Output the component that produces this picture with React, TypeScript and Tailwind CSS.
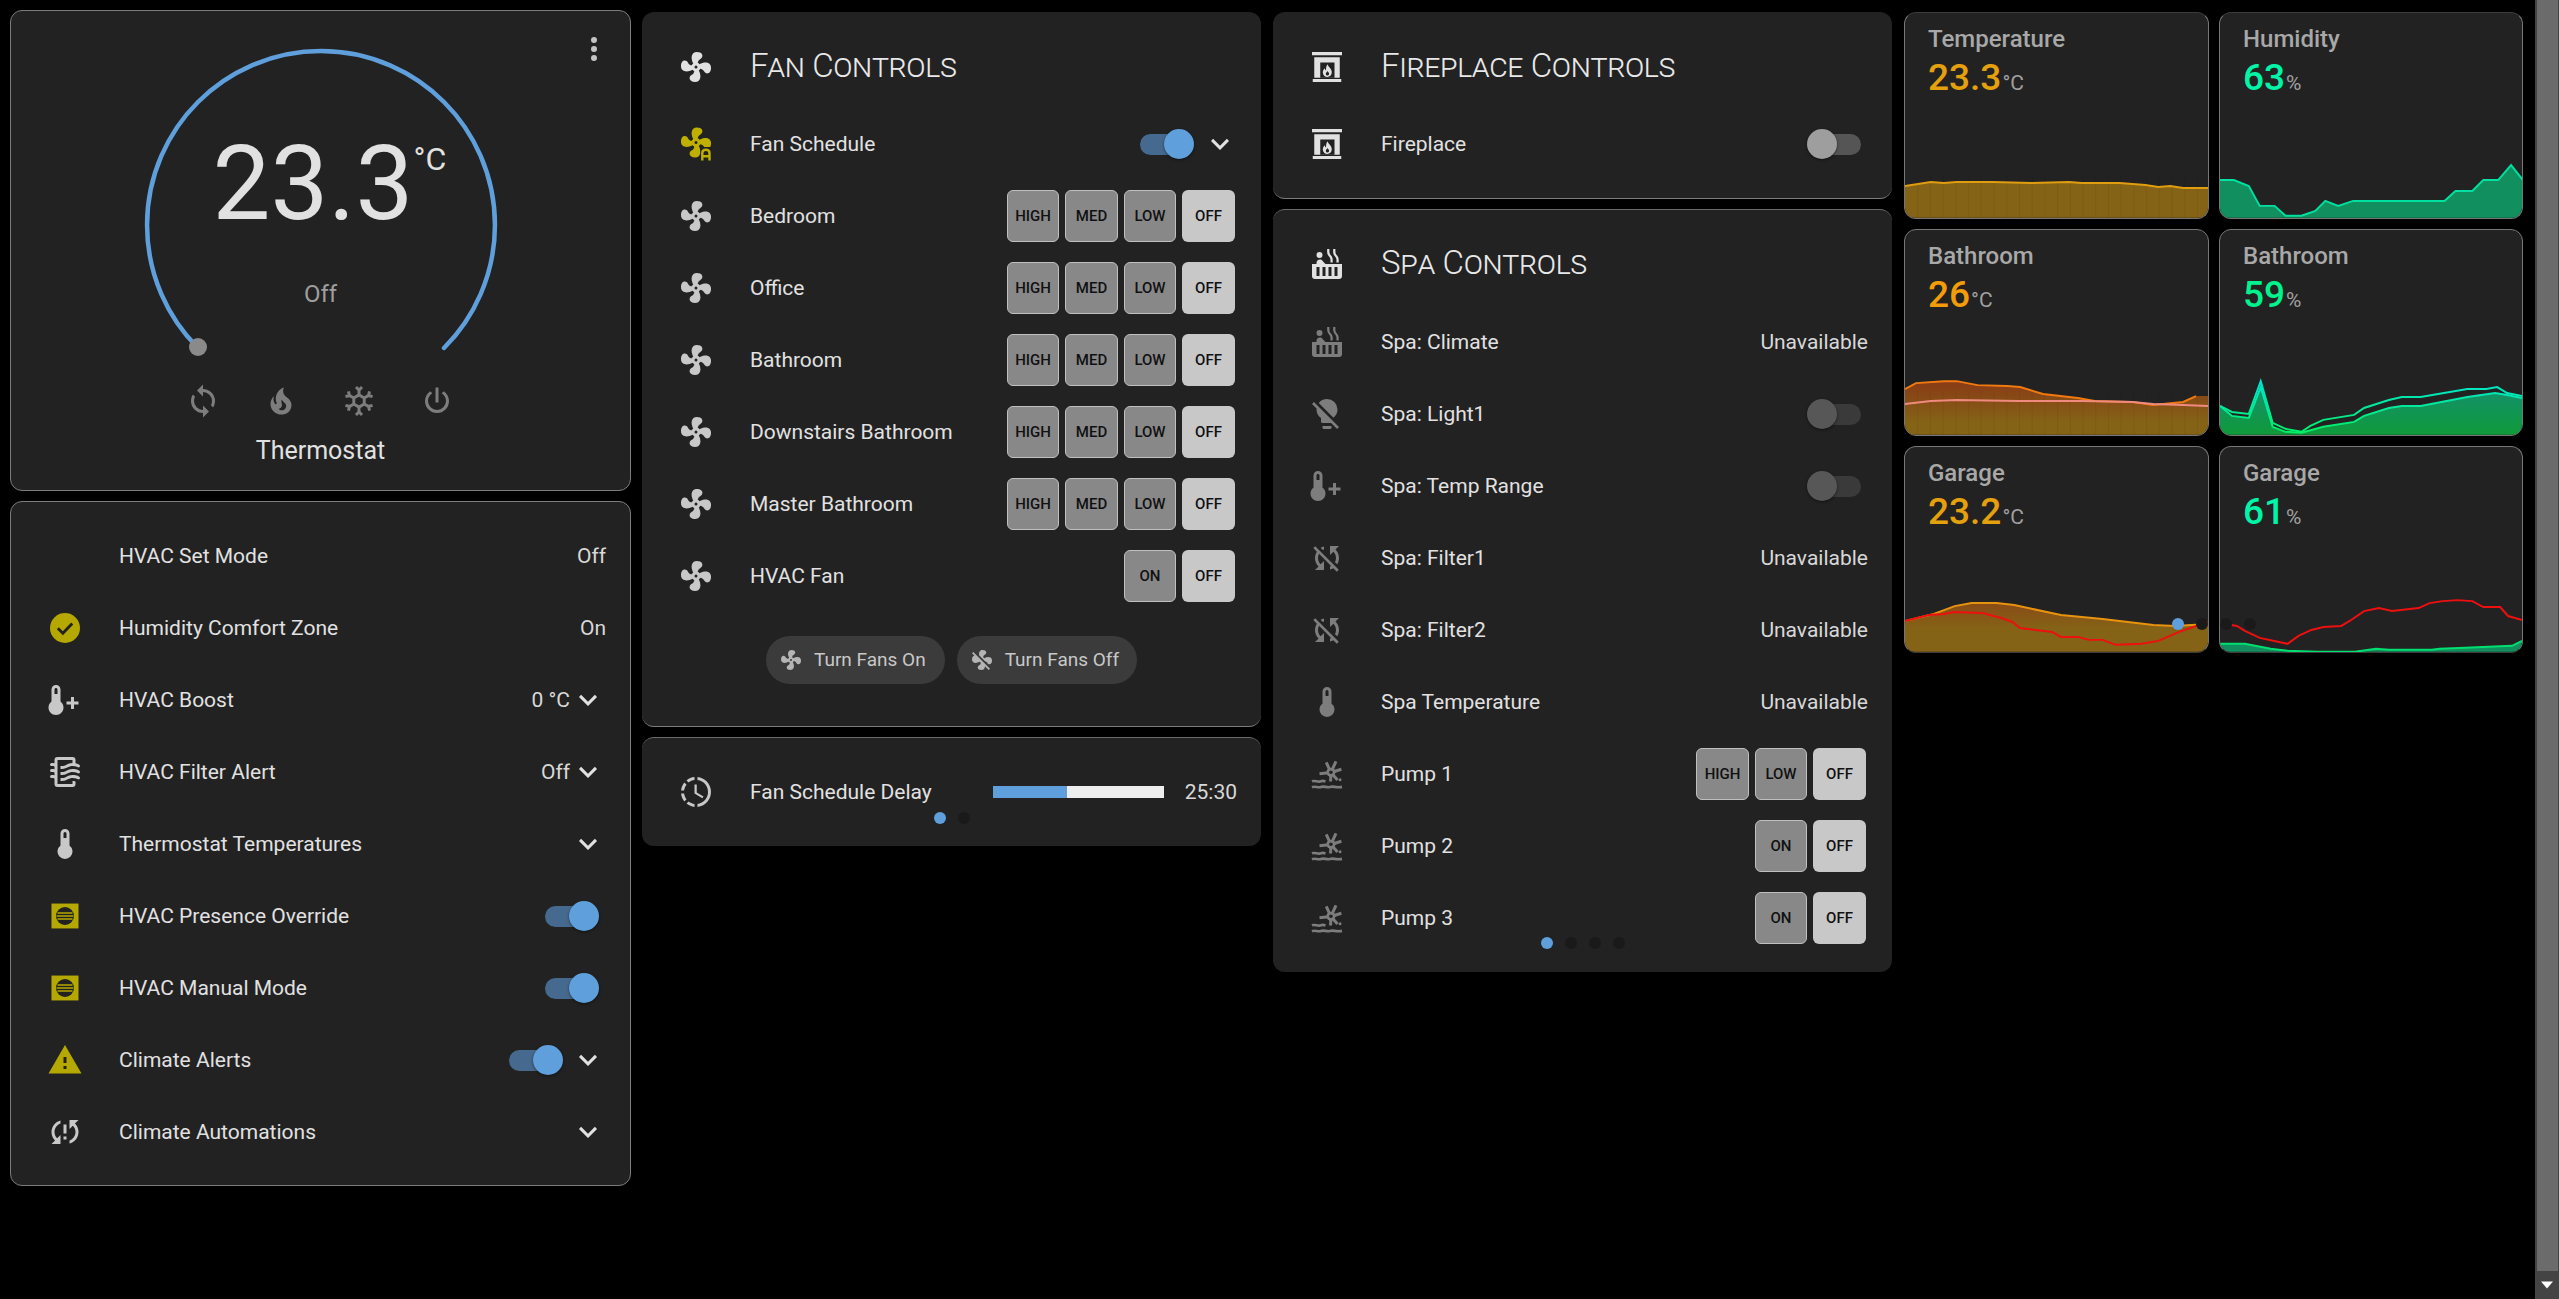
import React from 'react'

const FONT = "font-['Roboto',sans-serif]"

const P = {
  fan: 'M12,11A1,1 0 0,0 11,12A1,1 0 0,0 12,13A1,1 0 0,0 13,12A1,1 0 0,0 12,11M12.5,2C17,2 17.11,5.57 14.75,6.75C13.76,7.24 13.32,8.29 13.13,9.22C13.61,9.42 14.03,9.73 14.35,10.13C18.05,8.13 22.03,8.92 22.03,12.5C22.03,17 18.46,17.1 17.28,14.73C16.78,13.74 15.72,13.3 14.79,13.11C14.59,13.59 14.28,14 13.88,14.34C15.87,18.03 15.08,22 11.5,22C7,22 6.91,18.42 9.27,17.24C10.25,16.75 10.69,15.71 10.89,14.79C10.4,14.59 9.97,14.27 9.65,13.87C5.96,15.85 2,15.07 2,11.5C2,7 5.56,6.89 6.74,9.26C7.24,10.25 8.29,10.68 9.22,10.87C9.41,10.39 9.73,9.97 10.14,9.65C8.15,5.96 8.94,2 12.5,2Z',
  fanOff: 'M12.5,2C9.64,2 8.57,4.55 9.29,7.47L15,13.16C15.87,13.37 16.81,13.81 17.28,14.73C18.46,17.1 22.03,17 22.03,12.5C22.03,8.92 18.05,8.13 14.35,10.13C14.03,9.73 13.61,9.42 13.13,9.22C13.32,8.29 13.76,7.24 14.75,6.75C17.11,5.57 17,2 12.5,2M3.28,4L2,5.27L4.47,7.74C3.22,7.74 2,8.87 2,11.5C2,15.07 5.96,15.85 9.65,13.87C9.97,14.27 10.4,14.59 10.89,14.79C10.69,15.71 10.25,16.75 9.27,17.24C6.91,18.42 7,22 11.5,22C13.8,22 14.94,20.36 14.94,18.21L18.73,22L20,20.72L3.28,4Z',
  thermometer: 'M15 13V5A3 3 0 0 0 9 5V13A5 5 0 1 0 15 13M12 4A1 1 0 0 1 13 5V8H11V5A1 1 0 0 1 12 4Z',
  thermometerPlus: 'M9 13V5C9 3.3 7.7 2 6 2S3 3.3 3 5V13C1.8 13.9 1 15.4 1 17C1 19.8 3.2 22 6 22S11 19.8 11 17C11 15.4 10.2 13.9 9 13M5 5C5 4.4 5.4 4 6 4S7 4.4 7 5V8H5V5M18 10H16V13H13V15H16V18H18V15H21V13H18V10Z',
  airFilter: 'M19,18.31V20A2,2 0 0,1 17,22H7A2,2 0 0,1 5,20V16.3C4.54,16.12 3.95,16 3,16A1,1 0 0,1 2,15A1,1 0 0,1 3,14C3.82,14 4.47,14.08 5,14.21V12.3C4.54,12.12 3.95,12 3,12A1,1 0 0,1 2,11A1,1 0 0,1 3,10C3.82,10 4.47,10.08 5,10.21V8.3C4.54,8.12 3.95,8 3,8A1,1 0 0,1 2,7A1,1 0 0,1 3,6C3.82,6 4.47,6.08 5,6.21V4A2,2 0 0,1 7,2H17A2,2 0 0,1 19,4V6.16C20.78,6.47 21.54,7.13 21.71,7.29C22.1,7.68 22.1,8.32 21.71,8.71C21.32,9.1 20.8,9.09 20.29,8.71V8.71C20.29,8.71 19.25,8 17,8C15.74,8 14.91,8.41 13.95,8.9C12.91,9.41 11.74,10 10,10C9.64,10 9.31,10 9,9.96V7.95C9.3,8 9.63,8 10,8C11.26,8 12.09,7.59 13.05,7.11C14.09,6.59 15.27,6 17,6V4H7V20H17V18C18.5,18 18.97,18.29 19,18.31M17,10C15.27,10 14.09,10.59 13.05,11.11C12.09,11.59 11.26,12 10,12C9.63,12 9.3,12 9,11.95V13.96C9.31,14 9.64,14 10,14C11.74,14 12.91,13.41 13.95,12.89C14.91,12.41 15.74,12 17,12C19.25,12 20.29,12.71 20.29,12.71V12.71C20.8,13.1 21.32,13.1 21.71,12.71C22.1,12.32 22.1,11.69 21.71,11.29C21.5,11.08 20.25,10 17,10M17,14C15.27,14 14.09,14.59 13.05,15.11C12.09,15.59 11.26,16 10,16C9.63,16 9.3,16 9,15.95V17.96C9.31,18 9.64,18 10,18C11.74,18 12.91,17.41 13.95,16.89C14.91,16.41 15.74,16 17,16C19.25,16 20.29,16.71 20.29,16.71V16.71C20.8,17.1 21.32,17.1 21.71,16.71C22.1,16.32 22.1,15.69 21.71,15.29C21.5,15.08 20.25,14 17,14Z',
  alert: 'M13 14H11V10H13M13 18H11V16H13M1 21H23L12 2L1 21Z',
  syncAlert: 'M11,13H13V7H11M21,4H15V10L17.24,7.76C18.32,8.85 19,10.34 19,12C19,14.61 17.33,16.83 15,17.65V19.74C18.45,18.85 21,15.73 21,12C21,9.79 20.09,7.8 18.64,6.36M11,17H13V15H11M3,12C3,14.21 3.91,16.2 5.36,17.64L3,20H9V14L6.76,16.24C5.68,15.15 5,13.66 5,12C5,9.39 6.67,7.17 9,6.35V4.26C5.55,5.15 3,8.27 3,12Z',
  sync: 'M12,18A6,6 0 0,1 6,12C6,11 6.25,10.03 6.7,9.2L5.24,7.74C4.46,8.97 4,10.43 4,12A8,8 0 0,0 12,20V23L16,19L12,15M12,4V1L8,5L12,9V6A6,6 0 0,1 18,12C18,13 17.75,13.97 17.3,14.8L18.76,16.26C19.54,15.03 20,13.57 20,12A8,8 0 0,0 12,4Z',
  fire: 'M17.66 11.2C17.43 10.9 17.15 10.64 16.89 10.38C16.22 9.78 15.46 9.35 14.82 8.72C13.33 7.26 13 4.85 13.95 3C13 3.23 12.17 3.75 11.46 4.32C8.87 6.4 7.85 10.07 9.07 13.22C9.11 13.32 9.15 13.42 9.15 13.55C9.15 13.77 9 13.97 8.8 14.05C8.57 14.15 8.33 14.09 8.14 13.93C8.08 13.88 8.04 13.83 8 13.76C6.87 12.33 6.69 10.28 7.45 8.64C5.78 10 4.87 12.3 5 14.47C5.06 14.97 5.12 15.47 5.29 15.97C5.43 16.57 5.7 17.17 6 17.7C7.08 19.43 8.95 20.67 10.96 20.92C13.1 21.19 15.39 20.8 17.03 19.32C18.86 17.66 19.5 15 18.56 12.72L18.43 12.46C18.22 12 17.66 11.2 17.66 11.2M14.5 17.5C14.22 17.74 13.76 18 13.4 18.1C12.28 18.5 11.16 17.94 10.5 17.28C11.69 17 12.4 16.12 12.61 15.23C12.78 14.43 12.46 13.77 12.33 13C12.21 12.26 12.23 11.63 12.5 10.94C12.69 11.32 12.89 11.7 13.13 12C13.9 13 15.11 13.44 15.37 14.8C15.41 14.94 15.43 15.08 15.43 15.23C15.46 16.05 15.1 16.95 14.5 17.5H14.5Z',
  snowflake: 'M20.79,13.95L18.46,14.57L16.46,13.44V10.56L18.46,9.43L20.79,10.05L21.31,8.12L19.54,7.65L20,5.88L18.07,5.36L17.45,7.69L15.45,8.82L13,7.38V5.12L14.71,3.41L13.29,2L12,3.29L10.71,2L9.29,3.41L11,5.12V7.38L8.5,8.82L6.5,7.69L5.92,5.36L4,5.88L4.47,7.65L2.7,8.12L3.22,10.05L5.55,9.43L7.55,10.56V13.45L5.55,14.58L3.22,13.96L2.7,15.89L4.47,16.36L4,18.12L5.93,18.64L6.55,16.31L8.55,15.18L11,16.62V18.88L9.29,20.59L10.71,22L12,20.71L13.29,22L14.7,20.59L13,18.88V16.62L15.5,15.17L17.5,16.3L18.12,18.63L20,18.12L19.53,16.35L21.3,15.88L20.79,13.95M9.5,10.56L12,9.11L14.5,10.56V13.44L12,14.89L9.5,13.44V10.56Z',
  power: 'M16.56,5.44L15.11,6.89C16.84,7.94 18,9.83 18,12A6,6 0 0,1 12,18A6,6 0 0,1 6,12C6,9.83 7.16,7.94 8.88,6.88L7.44,5.44C5.36,6.88 4,9.28 4,12A8,8 0 0,0 12,20A8,8 0 0,0 20,12C20,9.28 18.64,6.88 16.56,5.44M13,3H11V13H13',
  dots: 'M12,16A2,2 0 0,1 14,18A2,2 0 0,1 12,20A2,2 0 0,1 10,18A2,2 0 0,1 12,16M12,10A2,2 0 0,1 14,12A2,2 0 0,1 12,14A2,2 0 0,1 10,12A2,2 0 0,1 12,10M12,4A2,2 0 0,1 14,6A2,2 0 0,1 12,8A2,2 0 0,1 10,6A2,2 0 0,1 12,4Z',
  chevron: 'M7.41,8.58L12,13.17L16.59,8.58L18,10L12,16L6,10L7.41,8.58Z',
  progressClock: 'M13,2.03V2.05L13,4.05C17.39,4.59 20.5,8.58 19.96,12.97C19.5,16.61 16.64,19.5 13,19.93V21.93C18.5,21.38 22.5,16.5 21.95,11C21.5,6.25 17.73,2.5 13,2.03M11,2.06C9.05,2.25 7.19,3 5.67,4.26L7.1,5.74C8.22,4.84 9.57,4.26 11,4.06V2.06M4.26,5.67C3,7.19 2.25,9.04 2.05,11H4.05C4.24,9.58 4.8,8.23 5.69,7.1L4.26,5.67M2.06,13C2.26,14.96 3.03,16.81 4.27,18.33L5.69,16.9C4.81,15.77 4.24,14.42 4.06,13H2.06M7.06,18.37L5.67,19.74C7.18,21 9.04,21.79 11,22V20C9.58,19.82 8.23,19.25 7.1,18.37H7.06M12.5,7V12.25L17,14.92L16.25,16.15L11,13V7H12.5Z',
  syncOff: 'M20,4H14V10L16.24,7.76C17.32,8.85 18,10.34 18,12C18,13 17.75,13.94 17.32,14.77L18.78,16.23C19.55,15 20,13.56 20,12C20,9.79 19.09,7.8 17.64,6.36L20,4M2.86,5.41L5.22,7.77C4.45,9 4,10.44 4,12C4,14.21 4.91,16.2 6.36,17.64L4,20H10V14L7.76,16.24C6.68,15.15 6,13.66 6,12C6,11 6.25,10.06 6.68,9.23L14.76,17.31C14.5,17.44 14.26,17.56 14,17.65V19.74C14.79,19.53 15.54,19.2 16.22,18.78L18.58,21.14L19.85,19.87L4.14,4.14L2.86,5.41M10,6.35V4.26C9.2,4.47 8.45,4.8 7.77,5.22L9.23,6.68C9.5,6.56 9.73,6.44 10,6.35Z',
  bulbOff: 'M12,2C9.76,2 7.78,3.05 6.5,4.68L16.31,14.5C17.94,13.21 19,11.24 19,9A7,7 0 0,0 12,2M3.28,4L2,5.27L5.04,8.3C5,8.53 5,8.76 5,9C5,11.38 6.19,13.47 8,14.74V17A1,1 0 0,0 9,18H14.73L18.73,22L20,20.72L3.28,4M9,20V21A1,1 0 0,0 10,22H14A1,1 0 0,0 15,21V20H9Z',
  hotTub: 'M7,4A2,2 0 0,1 9,6A2,2 0 0,1 7,8A2,2 0 0,1 5,6A2,2 0 0,1 7,4M11.15,12H22V20A2,2 0 0,1 20,22H4A2,2 0 0,1 2,20V12H5V11.25C5,10 6,9 7.25,9H7.28C7.62,9 7.95,9.08 8.24,9.22C8.5,9.35 8.74,9.54 8.93,9.76L10.33,11.31C10.5,11.5 10.68,11.66 10.88,11.81C10.96,11.86 11.05,11.93 11.15,12M7,20V14H5V20H7M11,20V14H9V20H11M15,20V14H13V20H15M19,20V14H17V20H19M18.4,6C19.4,7 19.9,8.3 19.8,9.6V11H18.3V9.5C18.4,8.6 18.1,7.7 17.5,7.1C16.5,6.1 16,4.8 16.1,3.4V2H17.6V3.5C17.5,4.4 17.8,5.3 18.4,6M14.4,6C15.4,7 15.9,8.3 15.8,9.6V11H14.3V9.5C14.4,8.6 14.1,7.7 13.5,7.1C12.5,6.1 12,4.8 12.1,3.4V2H13.6V3.5C13.5,4.4 13.8,5.3 14.4,6Z',
}

type IconProps = { d: string; color?: string; size?: string }

const Icon = ({ d, color = 'fill-[#c8c8c8]', size = 'w-9 h-9' }: IconProps) => (
  <svg viewBox="0 0 24 24" className={`${size} ${color} shrink-0`}>
    <path d={d} />
  </svg>
)

const FireplaceIcon = ({ color = 'fill-[#e1e1e1]' }: { color?: string }) => (
  <svg viewBox="0 0 24 24" className={`w-9 h-9 shrink-0 ${color}`}>
    <path d="M2 2H22V4.2H2ZM3.5 5.5H20.5V19.2H3.5ZM2.5 20H21.5V22H2.5Z" />
    <rect x="7.5" y="9" width="9.5" height="10.2" fill="#222" />
    <path d="M12.4 10.2C12.6 12 15.2 13 15.2 15.5C15.2 17.4 13.8 18.6 12.2 18.6C10.6 18.6 9.2 17.4 9.2 15.6C9.2 14.3 9.9 13.3 10.6 12.8C10.6 13.6 11 14.1 11.4 14.2C11.3 12.6 11.5 11.2 12.4 10.2M12.3 14.6C12 15.3 11.2 15.7 11.2 16.6C11.2 17.2 11.7 17.6 12.3 17.6C12.9 17.6 13.4 17.2 13.4 16.5C13.4 15.7 12.6 15.3 12.3 14.6Z" />
  </svg>
)

const PumpIcon = () => (
  <svg viewBox="0 0 24 24" className="w-9 h-9 shrink-0" fill="none" stroke="#7d7d7d">
    <path d="M14.6 11 L11.5 4.2 M14.6 11 L18 3.6 M14.6 11 L21.6 8.8 M14.6 11 L19 16 M14.6 11 L14.4 17 M14.6 11 L7 11.8" strokeWidth="2" />
    <circle cx="14.6" cy="10.8" r="3" fill="#7d7d7d" stroke="none" />
    <circle cx="14.6" cy="10.8" r="1.2" fill="#222" stroke="none" />
    <circle cx="20.7" cy="15.8" r="1" fill="#7d7d7d" stroke="none" />
    <path d="M2 16.9C4 16 6 17.7 8 16.8C9 16.4 10 16.6 11 17" strokeWidth="1.8" />
    <path d="M2 20.8C4 19.8 6 21.5 8 20.6C10 19.7 12 21.5 14 20.6C16 19.7 18 21.5 22 20.6" strokeWidth="1.8" />
  </svg>
)

const HvacIcon = () => (
  <svg viewBox="0 0 24 24" className="w-9 h-9 shrink-0">
    <rect x="3" y="3.7" width="18" height="16.6" fill="#b5a800" />
    <circle cx="12" cy="12" r="6" fill="#222" />
    <path d="M7 10H17M6.4 12H17.6M7 14H17" stroke="#b5a800" strokeWidth="1" />
  </svg>
)

const CheckIcon = () => (
  <svg viewBox="0 0 24 24" className="w-9 h-9 shrink-0">
    <circle cx="12" cy="12" r="10" fill="#b5a800" />
    <path d="M7.2 12.2L10.6 15.5L16.8 9" fill="none" stroke="#222" strokeWidth="1.9" />
  </svg>
)

const FanAutoIcon = () => (
  <svg viewBox="0 0 24 24" className="w-9 h-9 shrink-0">
    <path d={P.fan} transform="translate(0 -1)" fill="#bfb000" />
    <rect x="15" y="14" width="9" height="10" fill="#222" />
    <path d="M16.2 23V18C16.2 16.6 17.2 15.8 18.6 15.8C20 15.8 21 16.6 21 18V23M16.2 20.2H21" fill="none" stroke="#bfb000" strokeWidth="1.6" />
  </svg>
)

const Chevron = () => <Icon d={P.chevron} color="fill-[#e1e1e1]" />

const Toggle = ({ state = 'on' }: { state?: 'on' | 'off' | 'disabled' }) => {
  const track = state === 'on' ? 'bg-[#466a8f]' : state === 'off' ? 'bg-[#555555]' : 'bg-[#3a3a3a]'
  const thumb = state === 'on' ? 'bg-[#5f9fdc] right-0' : state === 'off' ? 'bg-[#9e9e9e] left-0' : 'bg-[#575757] left-0'
  return (
    <div className="relative w-[54px] h-[30px] flex items-center shrink-0">
      <div className={`h-[21px] w-[51px] rounded-full ${track} ${state === 'on' ? '' : 'ml-[3px]'}`} />
      <div className={`absolute top-0 w-[30px] h-[30px] rounded-full shadow-[0_1px_3px_rgba(0,0,0,0.5)] ${thumb}`} />
    </div>
  )
}

const SpeedButtons = ({ labels }: { labels: string[] }) => (
  <div className="flex gap-[6px] mr-[2px]">
    {labels.map((label, i) => (
      <div
        key={label}
        className={`h-[52px] ${i % 2 === labels.length % 2 ? 'w-[52px]' : 'w-[53px]'} rounded-[6px] flex items-center justify-center text-[15px] font-medium text-[#111] ${
          label === 'OFF' ? 'bg-[#c8c8c8]' : 'bg-[#888888] border border-[#c0c0c0]'
        }`}
      >
        {label}
      </div>
    ))}
  </div>
)

const Row = ({ icon, label, children }: { icon?: React.ReactNode; label: string; children?: React.ReactNode }) => (
  <div className="flex items-center h-[72px] pl-[36px] pr-[24px]">
    <div className="w-9 h-9 shrink-0">{icon}</div>
    <div className="ml-[36px] flex-1 pt-[2px] text-[21px] text-[#e1e1e1] whitespace-nowrap">{label}</div>
    {children}
  </div>
)

const Value = ({ children }: { children: React.ReactNode }) => (
  <span className="pt-[2px] text-[21px] text-[#d8d8d8] whitespace-nowrap">{children}</span>
)

const Heading = ({ icon, title }: { icon: React.ReactNode; title: string }) => (
  <div className="flex items-center h-[72px] pl-[36px]">
    <div className="w-9 h-9 shrink-0">{icon}</div>
    <div className="ml-[36px] -mt-[2px] text-[33px] font-light tracking-[-0.35px] text-[#e8e8e8] [font-variant:small-caps] whitespace-nowrap">{title}</div>
  </div>
)

const PageDots = ({ count, className }: { count: number; className: string }) => (
  <div className={`absolute flex gap-[12px] ${className}`}>
    {Array.from({ length: count }).map((_, i) => (
      <div key={i} className={`w-3 h-3 rounded-full ${i === 0 ? 'bg-[#5f9fdc]' : 'bg-[#1a1a1a]'}`} />
    ))}
  </div>
)

// Graph points are read off the screenshot, in px inside a 64px tall strip
type Pt = [number, number]

const line = (pts: Pt[]) => pts.map(p => p.join(',')).join(' ')
const area = (pts: Pt[], w: number) => `${line(pts)} ${w},64 0,64`

const tempTop: Pt[] = [[0,32],[26,28],[39,29],[52,28],[88,28],[127,29],[165,28],[178,29],[216,29],[242,31],[255,33],[267,32],[280,34],[305,34]]
const humTop: Pt[] = [[0,26],[14,26],[29,32],[40,52],[55,52],[66,62],[82,62],[96,57],[106,47],[119,52],[134,47],[226,47],[237,37],[254,37],[265,26],[280,26],[293,11],[305,26]]
const bathTemp: Pt[] = [[0,18],[11,12],[39,10],[52,10],[73,14],[103,15],[116,16],[139,23],[174,27],[191,30],[229,31],[250,34],[280,31],[293,25],[305,25]]
const bathTemp2: Pt[] = [[0,33],[26,30],[52,29],[114,30],[178,30],[229,31],[250,33],[280,34],[305,35]]
const bathHum1: Pt[] = [[0,35],[12,41],[29,43],[41,10],[53,52],[66,58],[82,61],[91,55],[104,49],[135,44],[145,37],[170,29],[183,26],[202,26],[249,18],[268,18],[279,16],[289,22],[304,25]]
const bathHum2: Pt[] = [[0,35],[12,45],[29,47],[41,16],[53,56],[66,61],[82,62],[104,56],[135,51],[145,45],[170,37],[183,35],[202,35],[249,26],[277,22],[289,24],[304,27]]
const garTemp: Pt[] = [[0,33],[29,26],[50,18],[67,15],[92,15],[110,17],[157,27],[199,31],[250,37],[272,38],[305,36]]
const garRed: Pt[] = [[0,33],[24,27],[39,26],[50,24],[78,25],[97,30],[108,34],[116,40],[148,44],[157,49],[174,49],[185,52],[199,52],[212,57],[238,56],[255,53],[276,44],[305,34]]
const garHum: Pt[] = [[0,56],[25,56],[51,61],[68,63],[98,64],[136,64],[157,61],[170,62],[213,62],[221,61],[247,60],[294,58],[304,53]]
const garHumRed: Pt[] = [[0,35],[17,38],[25,43],[40,50],[68,56],[79,48],[92,42],[104,39],[122,38],[132,32],[145,23],[160,20],[173,23],[200,20],[211,15],[224,13],[239,12],[254,13],[265,19],[282,19],[290,28],[304,32]]

const Ticks = ({ w }: { w: number }) => (
  <g stroke="#000" strokeOpacity="0.06" strokeWidth="1">
    {Array.from({ length: Math.floor(w / 12.8) }).map((_, i) => (
      <line key={i} x1={(i + 1) * 12.8} x2={(i + 1) * 12.8} y1="20" y2="64" />
    ))}
  </g>
)

const Graph = ({ w, children }: { w: number; children: React.ReactNode }) => (
  <svg viewBox={`0 0 ${w} 64`} className="mt-auto w-full h-16 block overflow-visible" fill="none">
    {children}
  </svg>
)

type SensorProps = { title: string; value: string; unit: string; valueColor: string; edge?: string; children: React.ReactNode }

const SensorCard = ({ title, value, unit, valueColor, edge = '', children }: SensorProps) => (
  <div className={`h-[207px] rounded-[12px] bg-[#222222] border border-[#777777] ${edge} overflow-hidden flex flex-col`}>
    <div className="pl-[23px] pt-[12px]">
      <div className="text-[24px] leading-[28px] font-medium text-[#a8a8a8]">{title}</div>
      <div className="flex items-baseline mt-[4px] leading-[42px]">
        <span className={`text-[37px] font-medium ${valueColor}`}>{value}</span>
        <span className="text-[21px] text-[#a0a0a0] ml-[1px]">{unit}</span>
      </div>
    </div>
    {children}
  </div>
)

const Card = ({ className = '', children }: { className?: string; children: React.ReactNode }) => (
  <div className={`relative rounded-[12px] bg-[#222222] ${className}`}>{children}</div>
)

const FAN_ROWS = ['Bedroom', 'Office', 'Bathroom', 'Downstairs Bathroom', 'Master Bathroom']
const HML = ['HIGH', 'MED', 'LOW', 'OFF']

const Thermostat = () => (
  <div className="relative h-[481px] rounded-[12px] bg-[#222222] border border-[#7c7c7c] flex flex-col items-center">
    <Icon d={P.dots} color="fill-[#c4c4c4] absolute top-[20px] right-[18px]" />
    <div className="relative w-[380px] h-[361px] shrink-0">
      <svg viewBox="0 0 380 361" className="w-full h-full" fill="none">
        {/* 270 degree gauge, centre 190,214 radius 174 */}
        <path d="M67 337 A174 174 0 1 1 313 337" stroke="#5f9fdc" strokeWidth="4.5" strokeLinecap="round" />
        <circle cx="67" cy="336" r="9" fill="#8a8a8a" />
      </svg>
      <div className="absolute left-[82px] top-[113px] text-[103px] leading-[120px] font-normal text-[#e1e1e1]">23.3</div>
      <div className="absolute left-[283px] top-[130px] text-[32px] leading-[37px] font-normal text-[#e1e1e1]">°C</div>
      <div className="absolute inset-x-0 top-[269px] text-center text-[24px] leading-[28px] font-normal text-[#9e9e9e]">Off</div>
    </div>
    <div className="flex mt-[11px] pr-[2px] gap-[42px]">
      <Icon d={P.sync} color="fill-[#7d7d7d]" />
      <Icon d={P.fire} color="fill-[#7d7d7d]" />
      <Icon d={P.snowflake} color="fill-[#7d7d7d]" />
      <Icon d={P.power} color="fill-[#7d7d7d]" />
    </div>
    <div className="mt-[18px] text-[25px] leading-[28px] text-[#e1e1e1]">Thermostat</div>
  </div>
)

const ClimateList = () => (
  <div className="h-[685px] rounded-[12px] bg-[#222222] border border-[#7c7c7c] pt-[18px]">
    <Row label="HVAC Set Mode"><Value>Off</Value></Row>
    <Row icon={<CheckIcon />} label="Humidity Comfort Zone"><Value>On</Value></Row>
    <Row icon={<Icon d={P.thermometerPlus} />} label="HVAC Boost"><Value>0 °C</Value><Chevron /></Row>
    <Row icon={<Icon d={P.airFilter} />} label="HVAC Filter Alert"><Value>Off</Value><Chevron /></Row>
    <Row icon={<Icon d={P.thermometer} />} label="Thermostat Temperatures"><Chevron /></Row>
    <Row icon={<HvacIcon />} label="HVAC Presence Override"><div className="mr-[7px]"><Toggle /></div></Row>
    <Row icon={<HvacIcon />} label="HVAC Manual Mode"><div className="mr-[7px]"><Toggle /></div></Row>
    <Row icon={<Icon d={P.alert} color="fill-[#b5a800]" />} label="Climate Alerts"><div className="mr-[7px]"><Toggle /></div><Chevron /></Row>
    <Row icon={<Icon d={P.syncAlert} />} label="Climate Automations"><Chevron /></Row>
  </div>
)

const FanControls = () => (
  <Card className="h-[715px] pt-[19px] border-b border-[#7c7c7c]">
    <Heading icon={<Icon d={P.fan} color="fill-[#e1e1e1]" />} title="Fan Controls" />
    <div className="mt-[5px]">
      <Row icon={<FanAutoIcon />} label="Fan Schedule">
        <div className="flex items-center gap-[8px] -mr-[1px]"><Toggle /><Chevron /></div>
      </Row>
      {FAN_ROWS.map(name => (
        <Row key={name} icon={<Icon d={P.fan} />} label={name}><SpeedButtons labels={HML} /></Row>
      ))}
      <Row icon={<Icon d={P.fan} />} label="HVAC Fan"><SpeedButtons labels={['ON', 'OFF']} /></Row>
    </div>
    <div className="flex justify-center gap-[12px] mt-[24px] text-[19px] text-[#c8c8c8]">
      <div className="h-12 pl-[13px] pr-[19px] rounded-full bg-[#3b3b3b] flex items-center gap-[11px]">
        <Icon d={P.fan} size="w-6 h-6" color="fill-[#b4b4b4]" />Turn Fans On
      </div>
      <div className="h-12 pl-[13px] pr-[18px] rounded-full bg-[#3b3b3b] flex items-center gap-[11px]">
        <Icon d={P.fanOff} size="w-6 h-6" color="fill-[#b4b4b4]" />Turn Fans Off
      </div>
    </div>
  </Card>
)

const DelayCard = () => (
  <Card className="h-[109px] pt-[18px] border-t border-[#6a6a6a]">
    <Row icon={<Icon d={P.progressClock} />} label="Fan Schedule Delay">
      <div className="w-[171px] h-3 bg-[#eeeeee] mr-[21px]">
        <div className="w-[74px] h-3 bg-[#5f9fdc]" />
      </div>
      <Value>25:30</Value>
    </Row>
    <PageDots count={2} className="left-[292px] top-[74px]" />
  </Card>
)

const SpaControls = () => (
  <Card className="h-[763px] pt-[18px] border-t border-[#6a6a6a]">
    <Heading icon={<Icon d={P.hotTub} color="fill-[#e1e1e1]" />} title="Spa Controls" />
    <div className="mt-[6px]">
      <Row icon={<Icon d={P.hotTub} color="fill-[#7d7d7d]" />} label="Spa: Climate"><Value>Unavailable</Value></Row>
      <Row icon={<Icon d={P.bulbOff} color="fill-[#7d7d7d]" />} label="Spa: Light1"><div className="mr-[7px]"><Toggle state="disabled" /></div></Row>
      <Row icon={<Icon d={P.thermometerPlus} color="fill-[#7d7d7d]" />} label="Spa: Temp Range"><div className="mr-[7px]"><Toggle state="disabled" /></div></Row>
      <Row icon={<Icon d={P.syncOff} color="fill-[#7d7d7d]" />} label="Spa: Filter1"><Value>Unavailable</Value></Row>
      <Row icon={<Icon d={P.syncOff} color="fill-[#7d7d7d]" />} label="Spa: Filter2"><Value>Unavailable</Value></Row>
      <Row icon={<Icon d={P.thermometer} color="fill-[#7d7d7d]" />} label="Spa Temperature"><Value>Unavailable</Value></Row>
      <Row icon={<PumpIcon />} label="Pump 1"><SpeedButtons labels={['HIGH', 'LOW', 'OFF']} /></Row>
      <Row icon={<PumpIcon />} label="Pump 2"><SpeedButtons labels={['ON', 'OFF']} /></Row>
      <Row icon={<PumpIcon />} label="Pump 3"><SpeedButtons labels={['ON', 'OFF']} /></Row>
    </div>
    <PageDots count={4} className="left-[268px] top-[727px]" />
  </Card>
)

const Sensors = () => (
  <div className="relative w-[619px] grid grid-cols-[305px_304px] gap-[10px] content-start">
    <SensorCard title="Temperature" value="23.3" unit="°C" valueColor="text-[#e5a00d]" edge="border-t-[#3c3c3c]">
      <Graph w={305}>
        <polygon points={area(tempTop, 305)} fill="#846216" />
        <Ticks w={305} />
        <polyline points={line(tempTop)} stroke="#e09d0f" strokeWidth="2" />
      </Graph>
    </SensorCard>
    <SensorCard title="Humidity" value="63" unit="%" valueColor="text-[#00f5a8]" edge="border-t-[#3c3c3c]">
      <Graph w={304}>
        <polygon points={area(humTop, 304)} fill="#128f5e" />
        <polyline points={line(humTop)} stroke="#00e0a0" strokeWidth="2" />
      </Graph>
    </SensorCard>
    <SensorCard title="Bathroom" value="26" unit="°C" valueColor="text-[#f39c0a]">
      <Graph w={305}>
        <defs>
          <linearGradient id="rust" x1="0" x2="0" y1="0" y2="1">
            <stop offset="0" stopColor="#8a3a16" />
            <stop offset="0.75" stopColor="#846216" />
          </linearGradient>
        </defs>
        <polygon points={area(bathTemp, 305)} fill="url(#rust)" />
        <Ticks w={305} />
        <polyline points={line(bathTemp.slice(0, 14))} stroke="#f07a10" strokeWidth="2" />
        <polyline points={line(bathTemp2)} stroke="#f08a80" strokeWidth="2" />
      </Graph>
    </SensorCard>
    <SensorCard title="Bathroom" value="59" unit="%" valueColor="text-[#00f38d]">
      <Graph w={304}>
        <defs>
          <linearGradient id="tealFill" x1="0" x2="0" y1="0" y2="1">
            <stop offset="0" stopColor="#14906e" />
            <stop offset="1" stopColor="#0f9a3a" />
          </linearGradient>
          <linearGradient id="tealLine" gradientUnits="userSpaceOnUse" x1="0" x2="0" y1="10" y2="64">
            <stop offset="0" stopColor="#00e5d0" />
            <stop offset="1" stopColor="#00f060" />
          </linearGradient>
        </defs>
        <polygon points={area(bathHum2, 304)} fill="url(#tealFill)" />
        <polyline points={line(bathHum1)} stroke="url(#tealLine)" strokeWidth="2" />
        <polyline points={line(bathHum2)} stroke="url(#tealLine)" strokeWidth="2" />
      </Graph>
    </SensorCard>
    <SensorCard title="Garage" value="23.2" unit="°C" valueColor="text-[#e5a00d]" edge="border-b-[#3c3c3c]">
      <Graph w={305}>
        <defs>
          <linearGradient id="rust2" gradientUnits="userSpaceOnUse" x1="0" x2="0" y1="14" y2="40">
            <stop offset="0" stopColor="#8a4a16" />
            <stop offset="1" stopColor="#846216" />
          </linearGradient>
        </defs>
        <polygon points={area(garTemp, 305)} fill="url(#rust2)" />
        <polyline points={line(garTemp)} stroke="#e8930f" strokeWidth="2" />
        <polyline points={line(garRed)} stroke="#ee0f0f" strokeWidth="2" />
      </Graph>
    </SensorCard>
    <SensorCard title="Garage" value="61" unit="%" valueColor="text-[#00f5a8]" edge="border-b-[#3c3c3c]">
      <Graph w={304}>
        <polygon points={area(garHum, 304)} fill="#128f5e" />
        <polyline points={line(garHum)} stroke="#00e070" strokeWidth="2" />
        <polyline points={line(garHumRed)} stroke="#ee0f0f" strokeWidth="2" />
      </Graph>
    </SensorCard>
    <PageDots count={4} className="left-[268px] top-[606px]" />
  </div>
)

const Scrollbar = () => (
  <div className="w-6 h-full bg-[#444444] flex flex-col items-center shrink-0">
    <div className="w-[21px] flex-1 bg-[#6b6b6b]" />
    <div className="h-7 flex items-center justify-center">
      <svg viewBox="0 0 12 7" className="w-3 h-2 fill-white">
        <path d="M0 0H12L6 7Z" />
      </svg>
    </div>
  </div>
)

export default function App() {
  return (
    <div className={`${FONT} h-[1299px] w-full bg-black flex overflow-hidden`}>
      <div className="flex-1 flex pl-[10px] gap-[12px]">
        <div className="w-[621px] pt-[10px] flex flex-col gap-[10px] mr-[-1px]">
          <Thermostat />
          <ClimateList />
        </div>
        <div className="w-[619px] pt-[12px] flex flex-col gap-[10px]">
          <FanControls />
          <DelayCard />
        </div>
        <div className="w-[619px] pt-[12px] flex flex-col gap-[10px]">
          <Card className="h-[187px] pt-[19px] border-b border-[#7c7c7c]">
            <Heading icon={<FireplaceIcon />} title="Fireplace Controls" />
            <div className="mt-[5px]">
              <Row icon={<FireplaceIcon />} label="Fireplace"><div className="mr-[7px]"><Toggle state="off" /></div></Row>
            </div>
          </Card>
          <SpaControls />
        </div>
        <div className="pt-[12px] flex">
          <Sensors />
        </div>
      </div>
      <Scrollbar />
    </div>
  )
}
